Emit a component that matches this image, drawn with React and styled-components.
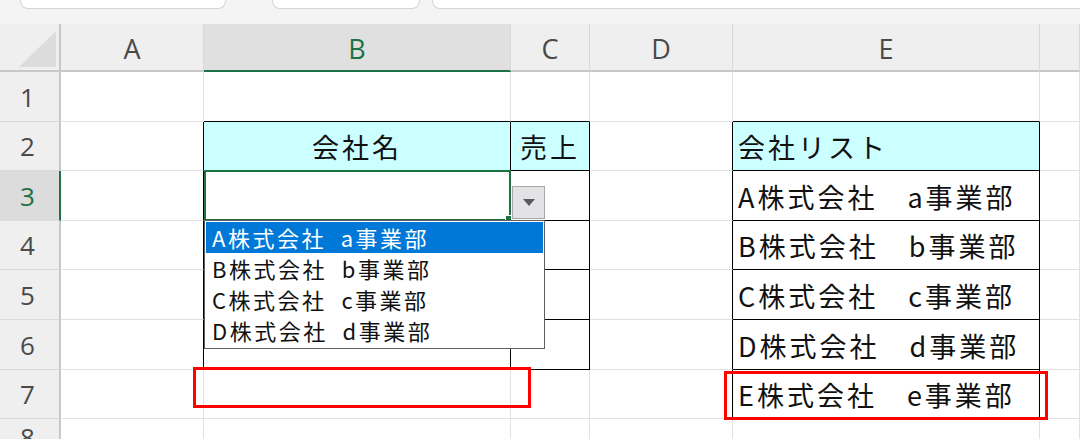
import React from "react";
import styled, { createGlobalStyle } from "styled-components";

const Global = createGlobalStyle`
  html, body { margin: 0; padding: 0; background: #fff; overflow: hidden; }
  * { box-sizing: border-box; }
`;

const Page = styled.div`
  width: 1080px;
  height: 439px;
  display: flex;
  flex-direction: column;
  overflow: hidden;
`;

const TopBar = styled.div`
  height: 24px;
  flex: none;
  display: flex;
  align-items: flex-start;
  background: #f4f4f4;
`;

const BarField = styled.div`
  height: 9px;
  width: ${(p) => p.$w}px;
  margin-left: ${(p) => p.$ml}px;
  flex: ${(p) => (p.$grow ? "1" : "none")};
  background: #fff;
  border: 1px solid #d4d4d4;
  border-top: none;
  border-radius: ${(p) => (p.$grow ? "0 0 0 8px" : "0 0 8px 8px")};
  border-right: ${(p) => (p.$grow ? "none" : "1px solid #d4d4d4")};
`;

const Sheet = styled.div`
  flex: 1;
  display: grid;
  grid-template-columns: 61px 143px 307px 79px 143px 307px 1fr;
  grid-template-rows: 48px 50px 49px 50px 49px 50px 50px 49px 1fr;
  font-family: "Noto Sans CJK JP", "Noto Sans", sans-serif;
`;

const Corner = styled.div`
  background: #efefef;
  border-right: 2px solid #c8c8c8;
  border-bottom: 2px solid #c8c8c8;
  display: flex;
  align-items: flex-end;
  justify-content: flex-end;
  padding: 0 3px 3px 0;
`;

const ColHead = styled.div`
  background: ${(p) => (p.$sel ? "#e0e0e0" : "#efefef")};
  border-right: 1px solid #d8d8d8;
  border-bottom: 2px solid ${(p) => (p.$sel ? "#1e7145" : "#c8c8c8")};
  display: flex;
  align-items: center;
  justify-content: center;
  font-family: "Open Sans", "Noto Sans", sans-serif;
  font-size: 27px;
  color: ${(p) => (p.$sel ? "#1e7145" : "#4a4a4a")};
  padding-top: 2px;
`;

const RowHead = styled.div`
  background: ${(p) => (p.$sel ? "#dcdcdc" : "#efefef")};
  border-right: 2px solid ${(p) => (p.$sel ? "#1e7145" : "#c8c8c8")};
  border-bottom: 1px solid #dadada;
  display: flex;
  align-items: center;
  justify-content: center;
  font-family: "Open Sans", "Noto Sans", sans-serif;
  font-size: 26px;
  color: ${(p) => (p.$sel ? "#1e7145" : "#4a4a4a")};
  padding-right: 4px;
  overflow: hidden;
`;

const Cell = styled.div`
  position: relative;
  border-right: 1px solid ${(p) => (p.$r ? "#000" : "#e1e1e1")};
  border-bottom: 1px solid ${(p) => (p.$b ? "#000" : "#e1e1e1")};
  background: ${(p) => (p.$fill ? "#ccffff" : "#fff")};
  display: flex;
  align-items: center;
  justify-content: ${(p) => (p.$center ? "center" : "flex-start")};
  padding-left: ${(p) => (p.$center ? "0" : "5px")};
  padding-top: 1px;
  font-size: 27px;
  letter-spacing: 3px;
  color: #111;
  white-space: pre;
`;

const Selection = styled.div`
  position: absolute;
  top: -1px;
  left: 0;
  right: -1px;
  bottom: -1px;
  border: 2px solid #1e7145;
  pointer-events: none;
  &::after {
    content: "";
    position: absolute;
    right: -4px;
    bottom: -4px;
    width: 6px;
    height: 6px;
    background: #1e7145;
    border: 1px solid #fff;
  }
`;

const ArrowButton = styled.div`
  position: absolute;
  left: 308px;
  top: 15px;
  width: 33px;
  height: 33px;
  background: #e3e3e6;
  border: 1px solid #a8a8a8;
  display: flex;
  align-items: center;
  justify-content: center;
  z-index: 3;
`;

const List = styled.ul`
  position: absolute;
  left: 0;
  top: 49px;
  width: 341px;
  height: 129px;
  margin: 0;
  padding: 1px 1px 0 1px;
  list-style: none;
  background: #fff;
  border: 1px solid #5f5f5f;
  z-index: 4;
`;

const Item = styled.li`
  height: 31px;
  line-height: 31px;
  padding-left: 6px;
  font-family: "Noto Sans CJK JP", sans-serif;
  font-size: 22px;
  letter-spacing: 2.5px;
  white-space: pre;
  color: ${(p) => (p.$active ? "#fff" : "#111")};
  background: ${(p) => (p.$active ? "#0078d7" : "transparent")};
`;

const RedBox = styled.div`
  position: absolute;
  left: ${(p) => p.$l}px;
  top: ${(p) => p.$t}px;
  width: ${(p) => p.$w}px;
  height: ${(p) => p.$h}px;
  border: 3px solid #ff0000;
  z-index: 5;
  pointer-events: none;
`;

const colLetters = ["A", "B", "C", "D", "E", ""];
const companies = ["A", "B", "C", "D", "E"];
const lower = ["a", "b", "c", "d", "e"];

export default function App() {
  const rows = [1, 2, 3, 4, 5, 6, 7, 8];

  const renderRow = (r) => {
    const inBC = r >= 2 && r <= 6;
    const inE = r >= 2 && r <= 7;
    const cells = [];
    cells.push(<Cell key="A" $r={inBC} />);
    cells.push(
      <Cell
        key="B"
        $r={inBC}
        $b={r === 1 || inBC}
        $fill={r === 2}
        $center={r === 2}
      >
        {r === 2 ? "会社名" : null}
        {r === 3 && (
          <>
            <Selection />
            <ArrowButton>
              <svg width="12" height="7" viewBox="0 0 12 7">
                <path d="M0 0 H12 L6 7 Z" fill="#5a5a5a" />
              </svg>
            </ArrowButton>
            <List>
              {companies.slice(0, 4).map((c, i) => (
                <Item key={c} $active={i === 0}>
                  {`${c}株式会社  ${lower[i]}事業部`}
                </Item>
              ))}
            </List>
          </>
        )}
        {r === 7 && <RedBox $l={-11} $t={-3} $w={338} $h={41} />}
      </Cell>
    );
    cells.push(
      <Cell
        key="C"
        $r={inBC}
        $b={r === 1 || inBC}
        $fill={r === 2}
        $center={r === 2}
      >
        {r === 2 ? "売上" : null}
      </Cell>
    );
    cells.push(<Cell key="D" $r={inE} />);
    let eText = null;
    if (r === 2) eText = "会社リスト";
    if (r >= 3 && r <= 7)
      eText = `${companies[r - 3]}株式会社　${lower[r - 3]}事業部`;
    cells.push(
      <Cell key="E" $r={inE} $b={r === 1 || inE} $fill={r === 2}>
        {eText}
        {r === 7 && <RedBox $l={-9} $t={1} $w={324} $h={49} />}
      </Cell>
    );
    cells.push(<Cell key="F" />);
    return cells;
  };

  return (
    <Page>
      <Global />
      <TopBar>
        <BarField $ml={20} $w={206} />
        <BarField $ml={46} $w={148} />
        <BarField $ml={12} $grow />
      </TopBar>
      <Sheet>
        <Corner>
          <svg width="37" height="36" viewBox="0 0 37 36">
            <path d="M37 0 V36 H0 Z" fill="#dcdcdc" />
          </svg>
        </Corner>
        {colLetters.map((l) => (
          <ColHead key={l || "F"} $sel={l === "B"}>
            {l}
          </ColHead>
        ))}
        {rows.map((r) => (
          <React.Fragment key={r}>
            <RowHead $sel={r === 3}>{r}</RowHead>
            {renderRow(r)}
          </React.Fragment>
        ))}
      </Sheet>
    </Page>
  );
}
